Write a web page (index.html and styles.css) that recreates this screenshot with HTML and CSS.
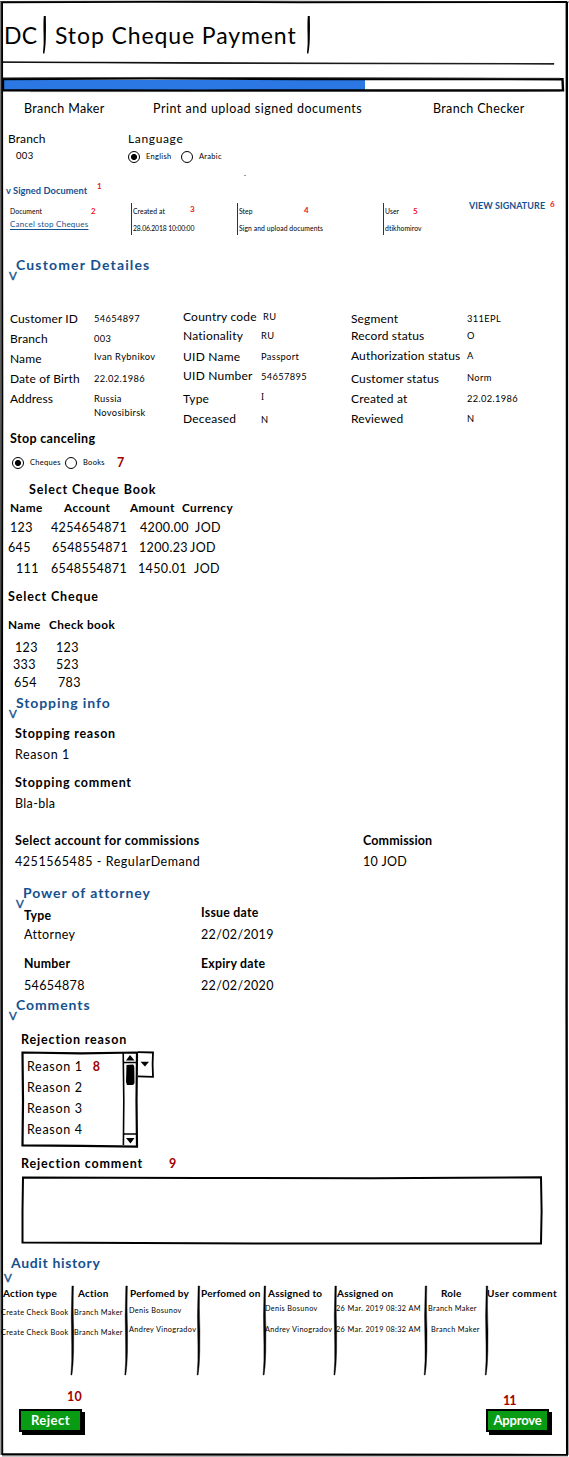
FILE: index.html
```html
<!DOCTYPE html>
<html lang="en">
<head>
<meta charset="utf-8">
<title>Stop Cheque Payment</title>
<link rel="stylesheet" href="styles.css">
</head>
<body>
<main class="page">
  <svg class="frame" viewBox="0 0 569 1457" aria-hidden="true">
    <path d="M0 1.5 L200 1 L569 2" stroke="#555" stroke-width="1"/>
    <path d="M1 2.3 L150 1.8 L300 2.3 L567 2" stroke-width="1.8"/>
    <path d="M2 2 L2.3 400 L1.8 900 L2.2 1455" stroke-width="2"/>
    <path d="M.8 2 L.5 700 L1 1455" stroke="#444" stroke-width="1"/>
    <path d="M566.8 2 L567 500 L566.6 1000 L567.2 1455" stroke-width="2.4"/>
    <path d="M2 1454.3 L300 1454.6 L568 1455" stroke-width="2.2"/>
    <path d="M2 1456 L200 1456.2 L568 1456" stroke="#777" stroke-width=".8"/>
  </svg>

  <header class="header">
    <div class="title">
      <span>DC</span>
      <svg class="tbar" viewBox="0 0 6 40"><path d="M1.8 1 H3.8 Q4.2 12 3.8 24 Q3.4 34 2.2 39 L1 38 Q2 28 1.6 20 Q1.2 8 1.8 1Z"/></svg>
      <h1>Stop Cheque Payment</h1>
      <svg class="tbar" viewBox="0 0 6 40"><path d="M1.8 1 H3.8 Q4.2 12 3.8 24 Q3.4 34 2.2 39 L1 38 Q2 28 1.6 20 Q1.2 8 1.8 1Z"/></svg>
    </div>
    <svg class="rule" viewBox="0 0 551 4"><path d="M0 .8 L200 1.6 L551 2.6 L551 3.2 L200 2.4 L0 1.4Z"/></svg>
  </header>

  <div class="progress">
    <svg viewBox="0 0 564 15"><rect x="4" y="3" width="361" height="10" fill="#2b78e4"/><path d="M3 2 L150 1.4 L300 2 L562.5 2.2 L563 13.4 L200 13.6 L3 13.2Z" fill="none" stroke="#000" stroke-width="2.4"/><path d="M3 .8 L160 .4 L560 1.2 M30 14.6 L560 14.4" stroke="#555" stroke-width=".7"/></svg>
  </div>

  <nav class="steps"><span>Branch Maker</span><span class="mid">Print and upload signed documents</span><span>Branch Checker</span></nav>

  <section class="locale">
    <div class="lb">Branch</div><div class="lb lang">Language</div>
    <div class="sm code">003</div>
    <div class="radios xs"><i class="radio on"></i><span class="r1">English</span><i class="radio"></i><span>Arabic</span></div>
    <i class="dash"></i>
  </section>

  <section class="signed">
    <div class="signed-head"><h3>v Signed Document</h3><b class="mark">1</b></div>
    <div class="doc">
      <div class="c c1"><div><span>Document</span><b class="mark m2">2</b></div><a>Cancel stop Cheques</a></div>
      <div class="c c2"><div><span>Created at</span><b class="mark m3">3</b></div><p class="date">28.06.2018 10:00:00</p></div>
      <div class="c c3"><div><span>Step</span><b class="mark m4">4</b></div><p>Sign and upload documents</p></div>
      <div class="c c4"><div><span>User</span><b class="mark m5">5</b></div><p>dtikhomirov</p></div>
      <div class="view"><strong>VIEW SIGNATURE</strong><b class="mark m6">6</b></div>
    </div>
  </section>

  <section class="customer">
    <h2><i>V</i>Customer Detailes</h2>
    <div class="details">
      <div class="k k1"><span>Customer ID</span><span>Branch</span><span>Name</span><span>Date of Birth</span><span>Address</span></div>
      <div class="v v1"><span>54654897</span><span>003</span><span>Ivan Rybnikov</span><span>22.02.1986</span><span>Russia</span><span>Novosibirsk</span></div>
      <div class="k k2"><span>Country code</span><span>Nationality</span><span>UID Name</span><span>UID Number</span><span>Type</span><span>Deceased</span></div>
      <div class="v v2"><span class="ru">RU</span><span>RU</span><span>Passport</span><span>54657895</span><span class="serif">I</span><span>N</span></div>
      <div class="k k3"><span>Segment</span><span>Record status</span><span>Authorization status</span><span>Customer status</span><span>Created at</span><span>Reviewed</span></div>
      <div class="v v3"><span>311EPL</span><span>O</span><span>A</span><span>Norm</span><span>22.02.1986</span><span>N</span></div>
    </div>
  </section>

  <section class="cancel">
    <h4>Stop canceling</h4>
    <div class="radios xs"><i class="radio on"></i><span class="r2">Cheques</span><i class="radio"></i><span class="r3">Books</span><b class="num">7</b></div>
  </section>

  <section class="book">
    <h4 class="wide">Select Cheque Book</h4>
    <div class="row hd"><b>Name</b><b>Account</b><b>Amount</b><b>Currency</b></div>
    <div class="row a"><span>123</span><span>4254654871</span><span>4200.00</span><span>JOD</span></div>
    <div class="row b"><span>645</span><span>6548554871</span><span>1200.23</span><span>JOD</span></div>
    <div class="row d"><span>111</span><span>6548554871</span><span>1450.01</span><span>JOD</span></div>
  </section>

  <section class="cheque">
    <h4 class="wide">Select Cheque</h4>
    <div class="row hd"><b>Name</b><b>Check book</b></div>
    <div class="row a"><span>123</span><span>123</span></div>
    <div class="row b"><span>333</span><span>523</span></div>
    <div class="row d"><span>654</span><span>783</span></div>
  </section>

  <section class="stopping">
    <h2><i>V</i>Stopping info</h2>
    <div class="cols">
      <div class="f"><h4 class="mid-wide">Stopping reason</h4><p class="rs">Reason 1</p><h4 class="mid-wide">Stopping comment</h4><p>Bla-bla</p><h4>Select account for commissions</h4><p class="acc">4251565485 - RegularDemand</p></div>
      <div class="g"><h4>Commission</h4><p>10 JOD</p></div>
    </div>
  </section>

  <section class="power">
    <h2><i>V</i>Power of attorney</h2>
    <div class="cols">
      <div class="f"><h4>Type</h4><p>Attorney</p><h4>Number</h4><p>54654878</p></div>
      <div class="g"><h4>Issue date</h4><p class="dt">22/02/2019</p><h4>Expiry date</h4><p class="dt">22/02/2020</p></div>
    </div>
  </section>

  <section class="comments">
    <h2><i>V</i>Comments</h2>
    <h4 class="rr wide">Rejection reason</h4>
    <div class="picker">
      <div class="list">
        <ul><li>Reason 1<b class="num">8</b></li><li>Reason 2</li><li>Reason 3</li><li>Reason 4</li></ul>
        <svg class="scroll" viewBox="0 0 16 96"><path d="M1.2 1 L1.8 50 L1.4 94 M1 11.5 H14 M1 83 H14" fill="none" stroke="#000" stroke-width="1.6"/><path d="M4 9.5 L8 4 L12.5 9.5Z M4 87 H12.5 L8.5 92.5Z"/><path d="M4.5 14 L11 13.5 Q12.5 14 12.3 17 L12.5 32 Q12 34.5 9.5 34 L5 34 L4 31Z"/></svg>
      </div>
      <svg class="drop" viewBox="0 0 16 27"><path d="M0 1.2 L15 1.5 L14.6 13 L15 25.8 L0 25.3" fill="none" stroke="#000" stroke-width="1.8"/><path d="M2.5 10.8 H11 L7 15.5Z"/></svg>
      <svg class="edge" viewBox="0 0 118 97"><path d="M1.5 1.5 L60 2.4 L116 1.5 L115.5 50 L116 95.6 L60 94.8 L1.5 94.4 L2 50Z" fill="none" stroke="#000" stroke-width="2.2"/></svg>
    </div>
    <div class="rc"><h4 class="wide">Rejection comment</h4><b class="num">9</b></div>
    <svg class="area" viewBox="0 0 522 69"><path d="M2 1.5 L180 2 L350 2.2 L520 1.2 L520.6 35 L520 67.5 L250 67.5 L1.5 66.6 L1.5 35Z" fill="#fff" stroke="#000" stroke-width="2"/></svg>
  </section>

  <section class="audit">
    <h2><i>V</i>Audit history</h2>
    <div class="tbl">
      <div class="q q1"><b>Action type</b><span>Create Check Book</span><span>Create Check Book</span></div>
      <div class="q q2"><b>Action</b><span>Branch Maker</span><span>Branch Maker</span></div>
      <div class="q q3"><b>Perfomed by</b><span>Denis Bosunov</span><span>Andrey Vinogradov</span></div>
      <div class="q q4"><b>Perfomed on</b></div>
      <div class="q q5"><b>Assigned to</b><span>Denis Bosunov</span><span>Andrey Vinogradov</span></div>
      <div class="q q6"><b>Assigned on</b><span>26 Mar. 2019 08:32 AM</span><span>26 Mar. 2019 08:32 AM</span></div>
      <div class="q q7"><b>Role</b><span>Branch Maker</span><span>Branch Maker</span></div>
      <div class="q q8"><b>User comment</b></div>
      <svg class="bars" viewBox="0 0 569 91">
        <defs><path id="bar" d="M0 0 L1.6 0 Q.9 20 1.8 45 L1.7 65 Q1.4 80 0 89 L-1 89 Q.2 75 -.2 60 Q-1.2 30 0 0Z" stroke="#000" stroke-width=".4"/></defs>
        <use href="#bar" x="71.9"/><use href="#bar" x="125.8"/><use href="#bar" x="198.1"/><use href="#bar" x="264.1"/><use href="#bar" x="334.9"/><use href="#bar" x="425.2"/><use href="#bar" x="486.2"/>
      </svg>
    </div>
  </section>

  <footer class="actions">
    <div class="act"><b class="num n10">10</b><button class="rej">Reject</button></div>
    <div class="act right"><b class="num n11">11</b><button>Approve</button></div>
  </footer>
</main>
</body>
</html>
```
FILE: styles.css
```css
* { box-sizing: border-box; margin: 0; padding: 0; }
body { background: #fff; color: #000; font: 12.5px/16px Lato, "Open Sans", sans-serif; letter-spacing: .35px; }
svg { display: block; overflow: visible; }
i { font-style: normal; }
.page {
  position: relative; width: 569px; height: 1457px; overflow: hidden; white-space: nowrap;
  display: grid; grid-template-columns: 569px;
  grid-template-rows: 77px 15px 33px 55px 75px 175px 50px 106px 107px 190px 112px 258px 132px 72px;
}
.frame { position: absolute; inset: 0; width: 569px; height: 1457px; fill: none; stroke: #000; pointer-events: none; }

h2 { display: flex; color: #16518f; font-size: 14px; line-height: 16px; letter-spacing: .9px; height: 26px; }
h2 i { width: 7px; margin-top: 11px; font-size: 11.5px; font-weight: 400; letter-spacing: 0; -webkit-text-stroke: .4px #16518f; }
h4 { font-size: 12.5px; line-height: 16px; letter-spacing: .35px; }
.wide { letter-spacing: .85px; }
.mid-wide { letter-spacing: .75px; }
.sm { font-size: 9.5px; }
.xs { font-size: 7.5px; letter-spacing: .3px; }
.num { color: #a00000; font-size: 12.5px; }
.mark { color: #e8141c; font-size: 8px; letter-spacing: 0; }

/* header */
.header { padding: 15px 0 0 3px; }
.title { display: grid; grid-template-columns: 38px 13px 251px 6px; height: 46px; font-size: 23px; line-height: 41px; padding-left: 1px; letter-spacing: .3px; }
.title h1 { font: inherit; letter-spacing: .9px; }
.tbar { width: 6px; height: 40px; }
.rule { width: 551px; height: 4px; stroke: #000; stroke-width: .7; }
.progress svg { width: 564px; height: 15px; }
.steps { display: grid; grid-template-columns: 129px 280px auto; padding: 9px 0 0 24px; }
.mid { letter-spacing: .5px; }

/* branch and language */
.locale { display: grid; grid-template-columns: 120px auto; grid-template-rows: 17px 18px 3px; padding: 6px 0 0 8px; align-content: start; }
.lb { font-size: 12px; letter-spacing: .1px; }
.lang { letter-spacing: .65px; }
.code { padding-left: 8px; }
.radios { display: flex; align-items: center; height: 18px; }
.radio { width: 12px; height: 12px; border: 1.5px solid #000; border-radius: 50%; flex: none; margin-right: 6px; }
.radio.on { background: radial-gradient(circle, #000 0 2.7px, #fff 3.3px); }
.r1 { width: 35px; }
.dash { grid-column: 2; width: 2px; height: 1px; background: #999; margin: 9px 0 0 116px; }

/* signed document */
.signed { padding-top: 3px; }
.signed-head { display: flex; padding-left: 6px; height: 20px; }
.signed h3 { font-size: 9.3px; color: #16518f; width: 91px; letter-spacing: .05px; }
.signed-head .mark { margin-top: -5px; }
.doc { display: grid; grid-template-columns: 121px 106px 146px 86px auto; padding-left: 10px; font-size: 6.8px; letter-spacing: .08px; }
.c { height: 32px; display: grid; grid-template-rows: 17px 15px; }
.c div { display: flex; }
.c + .c { border-left: 1px solid #333; padding-left: 1px; }
.c1 { grid-template-rows: 13px 19px; }
.c1 span { width: 81px; } .c2 span { width: 57px; } .c3 span { width: 65px; } .c4 span { width: 28px; }
.c a { font-size: 8px; color: #16518f; text-decoration: underline; text-underline-offset: 2px; letter-spacing: .25px; }
.date { letter-spacing: -.12px; }
.m3 { margin-top: -2px; } .m4 { margin-top: -1px; }
.view { display: flex; color: #16518f; font-size: 9px; margin-top: -5px; }
.view strong { width: 81px; letter-spacing: .05px; }
.m6 { margin-top: -2px; }

/* customer */
.customer { padding: 2px 0 0 9px; }
.customer h2 { letter-spacing: 1.15px; }
.details { display: grid; grid-template-columns: 85px 89px 78px 90px 116px auto; padding-top: 24px; }
.k, .v { display: grid; align-content: start; }
.k { font-size: 12px; letter-spacing: .22px; }
.v { font-size: 9.3px; }
.k1 { padding: 4px 0 0 1px; grid-template-rows: 20px 20px 20px 20px 16px; letter-spacing: .12px; }
.v1 { padding-top: 4px; grid-template-rows: 20px 18px 22px 20px 14px 16px; }
.k2 { padding-top: 2px; grid-template-rows: 19px 21px 19px 23px 20px 16px; }
.v2 { padding-top: 2px; grid-template-rows: 19px 21px 20px 20px 23px 16px; }
.k3 { padding-top: 4px; grid-template-rows: 17px 20px 23px 20px 20px 16px; letter-spacing: .15px; }
.v3 { padding-top: 4px; grid-template-rows: 17px 20px 22px 21px 20px 16px; }
.ru { padding-left: 2px; }
.serif { font-family: "Liberation Serif", serif; }

/* cheque lists */
.cancel { padding: 1px 0 0 10px; }
.cancel .radios { padding-left: 2px; margin-top: 7px; }
.r2 { width: 35px; } .r3 { width: 34px; }
.book { padding-top: 2px; }
.book h4 { padding-left: 29px; height: 18px; }
.row { display: grid; }
.row.hd { font-size: 11.8px; letter-spacing: .4px; }
.book .row { height: 20px; grid-template-columns: 41px 89px 55px auto; padding-left: 10px; }
.book .hd { grid-template-columns: 54px 66px 52px auto; height: 20px; }
.book .b { grid-template-columns: 44px 87px 51px auto; padding-left: 8px; }
.book .d { grid-template-columns: 35px 87px 56px auto; padding-left: 16px; padding-top: 1px; }
.cheque { padding: 3px 0 0 8px; }
.cheque h4 { height: 28px; }
.cheque .hd { grid-template-columns: 41px auto; height: 23px; }
.cheque .a { grid-template-columns: 41px auto; padding-left: 7px; height: 17px; }
.cheque .b { grid-template-columns: 43px auto; padding-left: 5px; height: 18px; }
.cheque .d { grid-template-columns: 44px auto; padding-left: 6px; }

/* stopping info, power of attorney */
.stopping { padding: 2px 0 0 9px; }
.cols { display: grid; }
.cols > div { display: grid; align-content: start; }
.stopping .cols { grid-template-columns: 348px auto; padding-left: 6px; }
.stopping .f { grid-template-rows: 21px 28px 21px 37px 21px 16px; padding-top: 5px; }
.stopping .g { grid-template-rows: 21px 16px; padding-top: 112px; }
.stopping .g h4 { letter-spacing: .15px; }
.rs { letter-spacing: .6px; }
.acc { letter-spacing: .55px; }
.power { padding: 2px 0 0 16px; }
.power h4 { font-size: 12.3px; letter-spacing: .25px; }
.power .cols { grid-template-columns: 177px auto; padding-left: 8px; margin-top: -6px; }
.power .f { grid-template-rows: 19px 29px 22px 16px; padding-top: 3px; }
.power .g { grid-template-rows: 22px 29px 22px 16px; }

/* comments */
.comments { padding: 2px 0 0 9px; }
.rr { padding: 9px 0 0 12px; height: 28px; }
.picker { position: relative; display: flex; margin: 0 0 0 12px; height: 105px; }
.list { display: flex; width: 117px; height: 96px; }
.list ul { width: 101px; list-style: none; padding: 5px 0 0 6px; letter-spacing: .7px; }
.list li { height: 21px; line-height: 21px; }
.list .num { margin-left: 10px; }
.scroll { width: 16px; height: 96px; }
.drop { width: 16px; height: 27px; }
.edge { position: absolute; left: 0; top: 0; width: 118px; height: 97px; }
.rc { display: flex; padding-left: 12px; height: 20px; }
.rc h4 { width: 148px; }
.area { width: 522px; height: 69px; margin-left: 12px; }

/* audit */
.audit { padding: 2px 0 0 4px; }
.audit h2 { letter-spacing: .65px; }
.audit h2 i { margin-top: 15px; }
.tbl { position: relative; display: grid; grid-template-columns: 73px 55px 72px 64px 71px 92px 59px auto; margin: 5px 0 0 -3px; height: 91px; font-size: 7.3px; letter-spacing: .35px; }
.q { display: grid; grid-template-rows: 19px 20px 20px; align-content: start; }
.q b { font-size: 10px; letter-spacing: .2px; line-height: 15px; }
.q1 b { padding-left: 2px; } .q2 b { padding-left: 4px; } .q3 b { padding-left: 1px; } .q5 b { padding-left: 3px; } .q6 b { padding-left: 1px; } .q7 b { padding-left: 13px; }
.q8 b { letter-spacing: .45px; }
.q3 { grid-template-rows: 17px 19px 20px; }
.q5, .q6, .q7 { grid-template-rows: 15px 21px 20px; }
.q7 span:last-child { padding-left: 3px; }
.bars { position: absolute; left: -1px; top: 0; width: 569px; height: 91px; }

/* actions */
.actions { display: flex; justify-content: space-between; padding: 3px 20px 0 19px; }
.act { display: grid; grid-template-rows: 21px 23px; align-content: start; }
.n10 { padding: 1px 0 0 48px; } .n11 { padding: 5px 0 0 17px; letter-spacing: -1px; }
button { width: 63px; height: 23px; background: #0a9b14; color: #fff; border: 2px solid #000; font: 700 13px/17px Lato, sans-serif; letter-spacing: -.2px; box-shadow: 3px 3px 0 #000; white-space: nowrap; }
.rej { letter-spacing: .5px; }
```
